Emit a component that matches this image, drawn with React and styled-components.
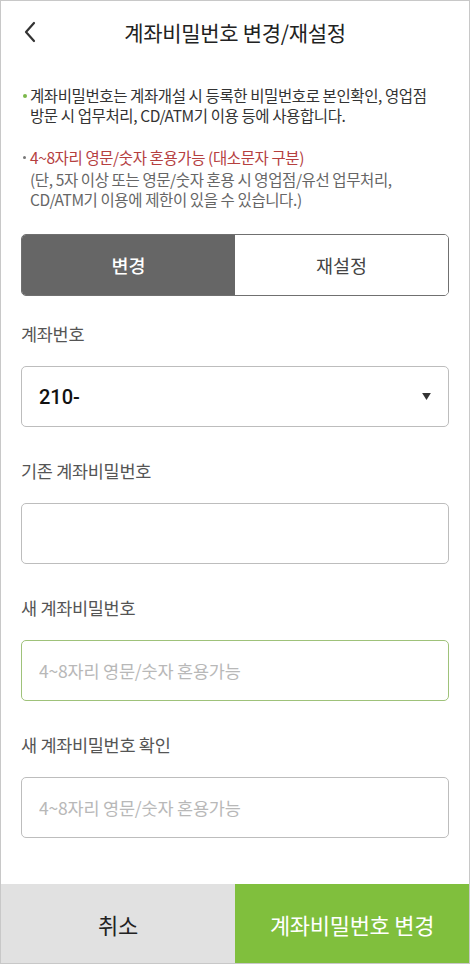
import React, { useState } from "react";
import styled, { createGlobalStyle } from "styled-components";

const Global = createGlobalStyle`
  html, body { margin: 0; padding: 0; background: #fff; }
  body {
    font-family: "Noto Sans CJK KR", "Noto Sans", sans-serif;
    color: #222;
  }
  * { box-sizing: border-box; }
`;

const Screen = styled.div`
  width: 470px;
  height: 964px;
  border: 1px solid #c8c8c8;
  display: flex;
  flex-direction: column;
  background: #fff;
  overflow: hidden;
`;

const Header = styled.header`
  height: 62px;
  display: flex;
  align-items: center;
  justify-content: center;
  position: relative;
`;

const BackBtn = styled.button`
  position: absolute;
  left: 14px;
  top: 16px;
  width: 30px;
  height: 30px;
  border: none;
  background: none;
  padding: 0;
  display: flex;
  align-items: center;
  justify-content: center;
`;

const Title = styled.h1`
  margin: 0;
  font-size: 21px;
  font-weight: 400;
  color: #222;
  letter-spacing: -0.3px;
`;

const Body = styled.main`
  flex: 1;
  padding: 22px 20px 0 20px;
  display: flex;
  flex-direction: column;
`;

const Notice = styled.div`
  display: flex;
  padding-left: 2px;
  font-size: 15.5px;
  line-height: 20px;
  letter-spacing: -0.4px;
  color: #333;
  margin-bottom: ${(p) => p.gap || 0}px;
`;

const Dot = styled.span`
  flex: none;
  width: 7px;
  position: relative;
  &::before {
    content: "";
    position: absolute;
    left: 0;
    top: 9px;
    width: ${(p) => p.size}px;
    height: ${(p) => p.size}px;
    border-radius: 50%;
    background: ${(p) => p.color};
  }
`;

const NoticeText = styled.div``;

const Red = styled.div`
  color: #b5403f;
  margin-bottom: 2px;
`;

const Gray = styled.div`
  color: #666;
`;

const Tabs = styled.div`
  margin-top: 25px;
  height: 62px;
  display: grid;
  grid-template-columns: 1fr 1fr;
  border: 1px solid #707070;
  border-radius: 5px;
  overflow: hidden;
`;

const Tab = styled.button`
  border: none;
  font-family: inherit;
  font-size: 18.5px;
  background: ${(p) => (p.active ? "#666" : "#fff")};
  color: ${(p) => (p.active ? "#fff" : "#444")};
  font-weight: ${(p) => (p.active ? 500 : 400)};
`;

const Label = styled.div`
  font-size: 17.5px;
  color: #555;
  margin-top: ${(p) => p.top}px;
  margin-bottom: 20px;
  line-height: 24px;
  letter-spacing: -0.3px;
`;

const Field = styled.div`
  height: 61px;
  border: 1px solid ${(p) => (p.focus ? "#9fc27a" : "#bdbdbd")};
  border-radius: 5px;
  display: flex;
  align-items: center;
  padding: 0 17px 0 17px;
`;

const SelectText = styled.span`
  flex: 1;
  font-family: "Roboto", "Noto Sans", sans-serif;
  font-size: 20px;
  font-weight: 500;
  color: #111;
`;

const Input = styled.input`
  flex: 1;
  border: none;
  outline: none;
  font-family: inherit;
  font-size: 17.5px;
  letter-spacing: -0.2px;
  color: #222;
  background: transparent;
  padding: 0;
  &::placeholder {
    color: #b8b8b8;
  }
`;

const Footer = styled.footer`
  height: 79px;
  display: grid;
  grid-template-columns: 234px 1fr;
`;

const FootBtn = styled.button`
  border: none;
  font-family: inherit;
  font-size: 22px;
  letter-spacing: -0.3px;
  background: ${(p) => (p.primary ? "#80bf3d" : "#e1e1e1")};
  color: ${(p) => (p.primary ? "#fff" : "#222")};
`;

export default function App() {
  const [tab, setTab] = useState(0);
  return (
    <>
      <Global />
      <Screen>
        <Header>
          <BackBtn aria-label="back">
            <svg width="14" height="22" viewBox="0 0 14 22" fill="none">
              <path d="M11 2 L3 11 L11 20" stroke="#333" strokeWidth="2.2" strokeLinecap="round" strokeLinejoin="round" />
            </svg>
          </BackBtn>
          <Title>계좌비밀번호 변경/재설정</Title>
        </Header>
        <Body>
          <Notice gap={22}>
            <Dot color="#7bb84a" size={4} />
            <NoticeText>
              계좌비밀번호는 계좌개설 시 등록한 비밀번호로 본인확인, 영업점
              <br />
              방문 시 업무처리, CD/ATM기 이용 등에 사용합니다.
            </NoticeText>
          </Notice>
          <Notice>
            <Dot color="#777" size={3} />
            <NoticeText>
              <Red>4~8자리 영문/숫자 혼용가능 (대소문자 구분)</Red>
              <Gray>
                (단, 5자 이상 또는 영문/숫자 혼용 시 영업점/유선 업무처리,
                <br />
                CD/ATM기 이용에 제한이 있을 수 있습니다.)
              </Gray>
            </NoticeText>
          </Notice>
          <Tabs>
            <Tab active={tab === 0} onClick={() => setTab(0)}>변경</Tab>
            <Tab active={tab === 1} onClick={() => setTab(1)}>재설정</Tab>
          </Tabs>
          <Label top={26}>계좌번호</Label>
          <Field>
            <SelectText>210-</SelectText>
            <svg width="9" height="7" viewBox="0 0 10 8">
              <path d="M0 0 H10 L5 8 Z" fill="#333" />
            </svg>
          </Field>
          <Label top={32}>기존 계좌비밀번호</Label>
          <Field>
            <Input type="password" />
          </Field>
          <Label top={32}>새 계좌비밀번호</Label>
          <Field focus>
            <Input placeholder="4~8자리 영문/숫자 혼용가능" />
          </Field>
          <Label top={32}>새 계좌비밀번호 확인</Label>
          <Field>
            <Input placeholder="4~8자리 영문/숫자 혼용가능" />
          </Field>
        </Body>
        <Footer>
          <FootBtn>취소</FootBtn>
          <FootBtn primary>계좌비밀번호 변경</FootBtn>
        </Footer>
      </Screen>
    </>
  );
}
